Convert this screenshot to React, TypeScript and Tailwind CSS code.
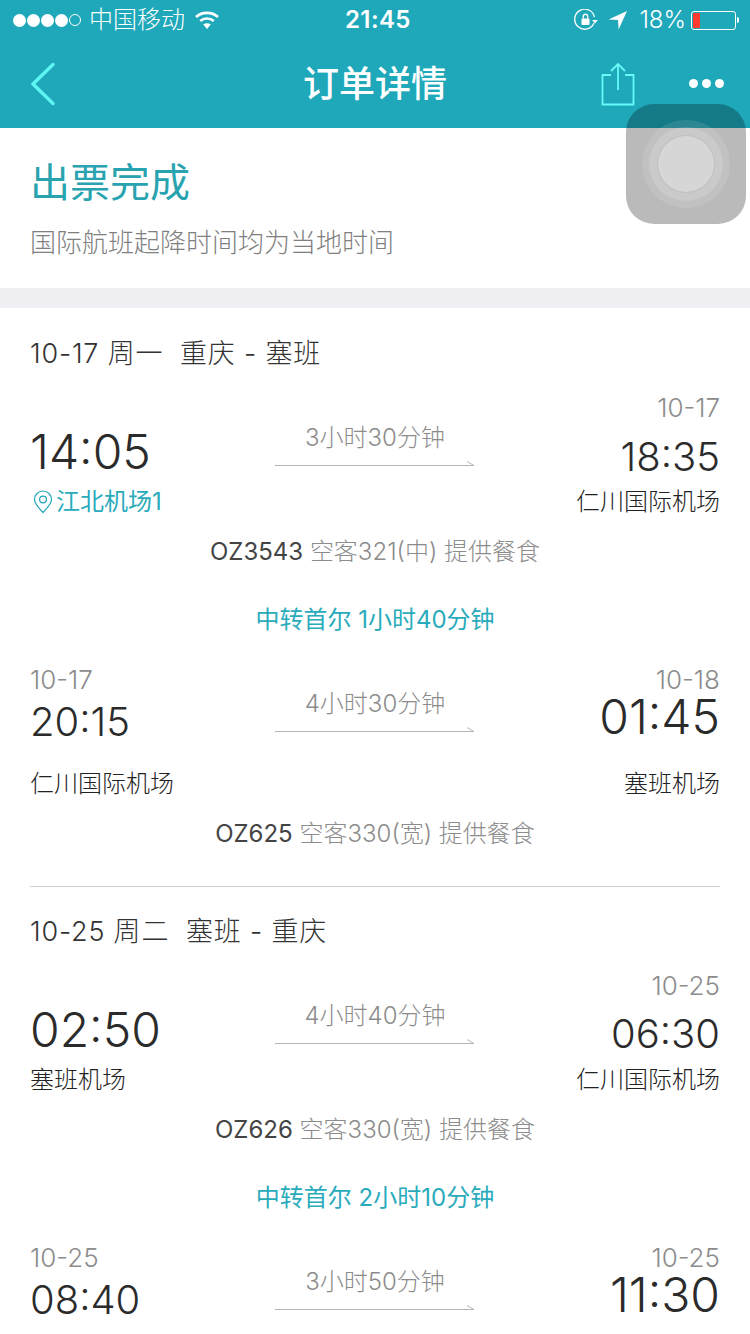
import React from "react";

const font = { fontFamily: 'Inter,"Noto Sans CJK SC",sans-serif' };

function Cell({ date, time, airport, timeClass, airportClass, align, pin }: { date?: string; time: string; airport: string; timeClass: string; airportClass: string; align: string; pin?: boolean }) {
  return (
    <div className={`flex flex-col ${align}`}>
      {date && <div className="h-[28px] text-[26px] font-light leading-[28px] text-[#8c8c8c]">{date}</div>}
      <div className={`${timeClass} font-[350] text-[#2b2b2b]`}>{time}</div>
      <div className={`${airportClass} flex h-[28px] items-center text-[24px] leading-[28px] ${pin ? "font-normal text-[#2aabbc]" : "font-light text-[#222222]"}`}>
        {pin && (
          <svg width="20" height="24" viewBox="0 0 20 24" fill="none" stroke="#1fa6b8" strokeWidth="1.2" className="ml-[3px] mr-[3px]">
            <path d="M10 22.5 C6 18 1.5 14 1.5 9.5 A8.5 8.5 0 0 1 18.5 9.5 C18.5 14 14 18 10 22.5 Z" />
            <circle cx="10" cy="9.5" r="3.4" />
          </svg>
        )}
        {airport}
      </div>
    </div>
  );
}

function Mid({ label, pad }: { label: string; pad: string }) {
  return (
    <div className={`absolute left-[245px] top-0 w-[200px] ${pad}`}>
      <div className="h-[28px] text-center text-[24px] font-light leading-[28px] text-[#8c8c8c]">{label}</div>
      <svg width="200" height="6" viewBox="0 0 200 6" className="mt-[8px] block">
        <path d="M0 5.5 H199 L192 1.5" fill="none" stroke="#b5b5b5" strokeWidth="1" />
      </svg>
    </div>
  );
}

function Flight({ no, rest, className }: { no: string; rest: string; className: string }) {
  return (
    <div className={`${className} h-[28px] text-center text-[24px] font-light leading-[28px] text-[#8c8c8c]`}>
      <span className="font-normal text-[#444444]">{no}</span> {rest}
    </div>
  );
}

function Transfer({ text }: { text: string }) {
  return <div className="mt-[40px] h-[28px] text-center text-[24px] font-normal leading-[28px] text-[#2aabbc]">{text}</div>;
}

function Route({ text, className }: { text: string; className: string }) {
  return <div className={`${className} h-[28px] whitespace-pre text-[27px] font-light leading-[28px] tracking-[0.8px] text-[#333333]`}>{text}</div>;
}

function Leg({ mt, label, pad, left, right }: { mt: string; label: string; pad: string; left: React.ReactNode; right: React.ReactNode }) {
  return (
    <div className={`relative flex justify-between ${mt}`}>
      <div>{left}</div>
      <Mid label={label} pad={pad} />
      <div>{right}</div>
    </div>
  );
}

export default function App() {
  return (
    <div className="relative h-[1334px] w-[750px] overflow-hidden bg-white" style={font}>
      <div className="bg-[#1ea8ba] text-white">
        <div className="flex h-[40px] items-center justify-between pl-[13px] pr-[11px]">
          <div className="flex items-center">
            <div className="flex gap-[1px]">
              <i className="h-[13px] w-[13px] rounded-full bg-white" />
              <i className="h-[13px] w-[13px] rounded-full bg-white" />
              <i className="h-[13px] w-[13px] rounded-full bg-white" />
              <i className="h-[13px] w-[13px] rounded-full bg-white" />
              <i className="h-[12px] w-[12px] rounded-full border border-white" />
            </div>
            <span className="ml-[8px] text-[24px] font-light leading-[28px]">中国移动</span>
            <svg width="26" height="20" viewBox="0 0 26 20" className="ml-[9px]" fill="none" stroke="white" strokeWidth="2.6">
              <path d="M2 7 C8 1.5 18 1.5 24 7" />
              <path d="M6.2 11 C10 7.6 16 7.6 19.8 11" />
              <path d="M13 19 L9.2 14.6 C11.4 12.9 14.6 12.9 16.8 14.6 Z" fill="white" stroke="none" />
            </svg>
          </div>
          <div className="absolute left-[345px] top-[6px] text-[24px] font-semibold leading-[28px] tracking-[0.4px]">21:45</div>
          <div className="flex items-center">
            <svg width="24" height="22" viewBox="0 0 24 22" fill="none" stroke="white" strokeWidth="1.3">
              <path d="M20 14 A10 10 0 1 1 20.5 8" />
              <path d="M18 11 L21 14.5 L23.8 11 Z" fill="white" stroke="none" />
              <rect x="7.5" y="9.5" width="8" height="6.5" rx="1" fill="white" stroke="none" />
              <path d="M9.3 9.5 V7.5 A2.2 2.2 0 0 1 13.7 7.5 V9.5" strokeWidth="1.4" />
            </svg>
            <svg width="20" height="20" viewBox="0 0 20 20" className="ml-[10px]">
              <path d="M19 1 L0.5 9.5 L10 10 L10.6 19.5 Z" fill="white" />
            </svg>
            <span className="ml-[11px] text-[24px] font-light leading-[28px]">18%</span>
            <div className="ml-[5px] flex items-center">
              <div className="flex h-[19px] w-[45px] items-center rounded-[3px] border border-white pl-[1px]">
                <i className="h-[15px] w-[7px] bg-[#ff3b30]" />
              </div>
              <i className="ml-[1px] h-[6px] w-[2px] rounded-r-full bg-white" />
            </div>
          </div>
        </div>
        <div className="relative flex h-[88px] items-center justify-center">
          <svg width="26" height="44" viewBox="0 0 26 44" className="absolute left-[30px] top-[22px]" fill="none" stroke="#5ff5f5" strokeWidth="3.4" strokeLinecap="round">
            <path d="M23 2.5 L3 22 L23 41.5" />
          </svg>
          <span className="text-[36px] font-medium leading-[44px]">订单详情</span>
          <svg width="34" height="44" viewBox="0 0 34 44" className="absolute left-[601px] top-[22px]" fill="none" stroke="#66fbf8" strokeWidth="1.8">
            <path d="M10 13 H1.5 V42.5 H32.5 V13 H24" />
            <path d="M17 28 V2.5 M10 9 L17 2 L24 9" />
          </svg>
          <div className="absolute left-[689px] top-[39px] flex gap-[4px]">
            <i className="h-[9px] w-[9px] rounded-full bg-white" />
            <i className="h-[9px] w-[9px] rounded-full bg-white" />
            <i className="h-[9px] w-[9px] rounded-full bg-white" />
          </div>
        </div>
      </div>

      <div className="h-[160px] px-[30px] pt-[31px]">
        <div className="text-[40px] font-normal leading-[48px] text-[#2aa3b0]">出票完成</div>
        <div className="mt-[21px] text-[26px] font-light leading-[30px] text-[#808080]">国际航班起降时间均为当地时间</div>
      </div>
      <div className="h-[20px] bg-[#efeff4]" />

      <div className="px-[30px]">
        <Route className="mt-[32px]" text="10-17 周一  重庆 - 塞班" />
        <Leg
          mt="mt-[26px]"
          label="3小时30分钟"
          pad="pt-[30px]"
          left={<Cell time="14:05" airport="江北机场1" pin align="items-start" timeClass="mt-[30px] text-[48px] leading-[56px]" airportClass="mt-[8px]" />}
          right={<Cell date="10-17" time="18:35" airport="仁川国际机场" align="items-end" timeClass="mt-[11px] text-[40px] leading-[48px]" airportClass="mt-[7px]" />}
        />
        <Flight className="mt-[22px]" no="OZ3543" rest="空客321(中) 提供餐食" />
        <Transfer text="中转首尔 1小时40分钟" />
        <Leg
          mt="mt-[32px]"
          label="4小时30分钟"
          pad="pt-[24px]"
          left={<Cell date="10-17" time="20:15" airport="仁川国际机场" align="items-start" timeClass="mt-[4px] text-[40px] leading-[48px]" airportClass="mt-[24px]" />}
          right={<Cell date="10-18" time="01:45" airport="塞班机场" align="items-end" timeClass="text-[48px] leading-[46px]" airportClass="mt-[30px]" />}
        />
        <Flight className="mt-[22px]" no="OZ625" rest="空客330(宽) 提供餐食" />
        <div className="mt-[38px] h-px bg-[#d0d0d0]" />
        <Route className="mt-[31px]" text="10-25 周二  塞班 - 重庆" />
        <Leg
          mt="mt-[26px]"
          label="4小时40分钟"
          pad="pt-[30px]"
          left={<Cell time="02:50" airport="塞班机场" align="items-start" timeClass="mt-[30px] text-[48px] leading-[56px]" airportClass="mt-[8px]" />}
          right={<Cell date="10-25" time="06:30" airport="仁川国际机场" align="items-end" timeClass="mt-[10px] text-[40px] leading-[48px]" airportClass="mt-[8px]" />}
        />
        <Flight className="mt-[22px]" no="OZ626" rest="空客330(宽) 提供餐食" />
        <Transfer text="中转首尔 2小时10分钟" />
        <div className="relative mt-[32px] flex justify-between">
          <div className="flex flex-col items-start">
            <div className="h-[28px] text-[26px] font-light leading-[28px] text-[#8c8c8c]">10-25</div>
            <div className="mt-[4px] text-[40px] font-[350] leading-[48px] text-[#2b2b2b]">08:40</div>
          </div>
          <Mid label="3小时50分钟" pad="pt-[24px]" />
          <div className="flex flex-col items-end">
            <div className="h-[28px] text-[26px] font-light leading-[28px] text-[#8c8c8c]">10-25</div>
            <div className="text-[48px] font-[350] leading-[46px] text-[#2b2b2b]">11:30</div>
          </div>
        </div>
      </div>

      <div className="absolute left-[626px] top-[104px] flex h-[120px] w-[120px] items-center justify-center rounded-[28px] bg-black/[0.27]">
        <div className="flex h-[88px] w-[88px] items-center justify-center rounded-full bg-white/10">
          <div className="flex h-[74px] w-[74px] items-center justify-center rounded-full bg-white/15">
            <div className="h-[58px] w-[58px] rounded-full border border-black/10 bg-[#d6d6d6]" />
          </div>
        </div>
      </div>
    </div>
  );
}
